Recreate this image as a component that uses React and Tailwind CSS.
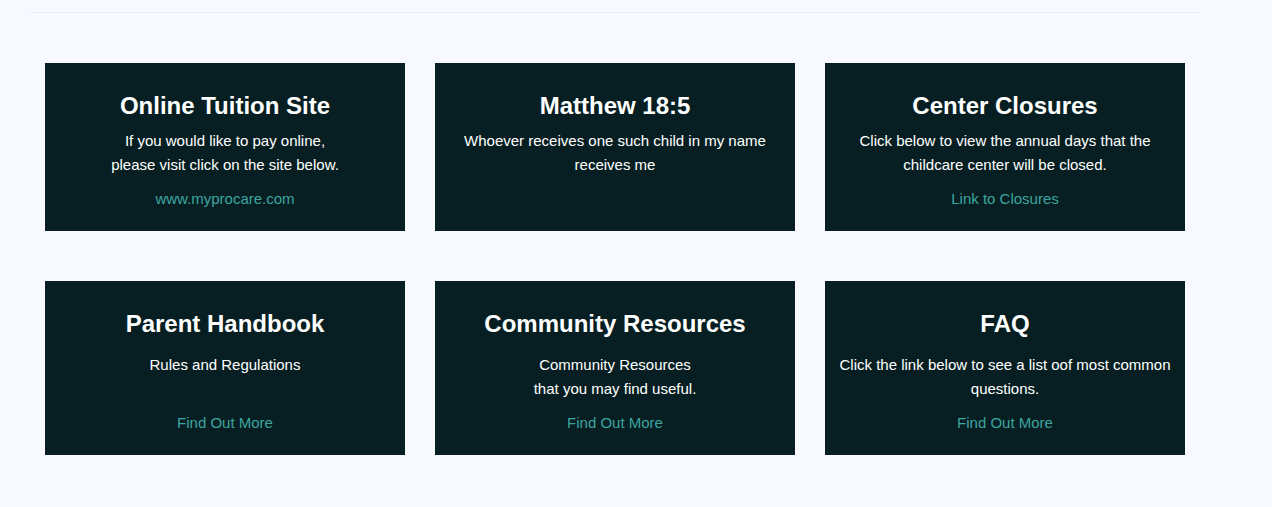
const cards = [
  {
    title: "Online Tuition Site",
    body: ["If you would like to pay online,", "please visit click on the site below."],
    link: "www.myprocare.com",
  },
  {
    title: "Matthew 18:5",
    body: ["Whoever receives one such child in my name", "receives me"],
  },
  {
    title: "Center Closures",
    body: ["Click below to view the annual days that the", "childcare center will be closed."],
    link: "Link to Closures",
  },
  {
    title: "Parent Handbook",
    body: ["Rules and Regulations", "\u00a0"],
    link: "Find Out More",
  },
  {
    title: "Community Resources",
    body: ["Community Resources", "that you may find useful."],
    link: "Find Out More",
  },
  {
    title: "FAQ",
    body: ["Click the link below to see a list oof most common", "questions."],
    link: "Find Out More",
  },
]

function Card({ title, body, link, second }) {
  return (
    <div className="bg-[#071f22] text-center pt-[29px] pb-[20px] px-3">
      <h3 className="text-[24px] leading-[28px] font-bold text-white">{title}</h3>
      <p className={`${second ? "mt-[15px]" : "mt-[9px]"} text-[15px] leading-[24px] text-white`}>
        {body.map((line, i) => (
          <span key={i} className="block">{line}</span>
        ))}
      </p>
      {link && (
        <a href="#" className="block mt-[10px] text-[15px] leading-[24px] text-[#3ca59f]">
          {link}
        </a>
      )}
    </div>
  )
}

export default function App() {
  return (
    <div className="min-h-[507px] bg-[#f8f9ff] font-['Liberation_Sans',Arial,sans-serif]">
      <div className="ml-[30px] w-[1170px] pt-[12px]">
        <div className="border-t border-[#eceef4]" />
        <div className="px-[15px] pt-[50px] flex flex-col gap-[50px]">
          <div className="grid grid-cols-3 gap-[30px]">
            {cards.slice(0, 3).map((c) => (
              <Card key={c.title} {...c} />
            ))}
          </div>
          <div className="grid grid-cols-3 gap-[30px]">
            {cards.slice(3).map((c) => (
              <Card key={c.title} {...c} second />
            ))}
          </div>
        </div>
      </div>
    </div>
  )
}
